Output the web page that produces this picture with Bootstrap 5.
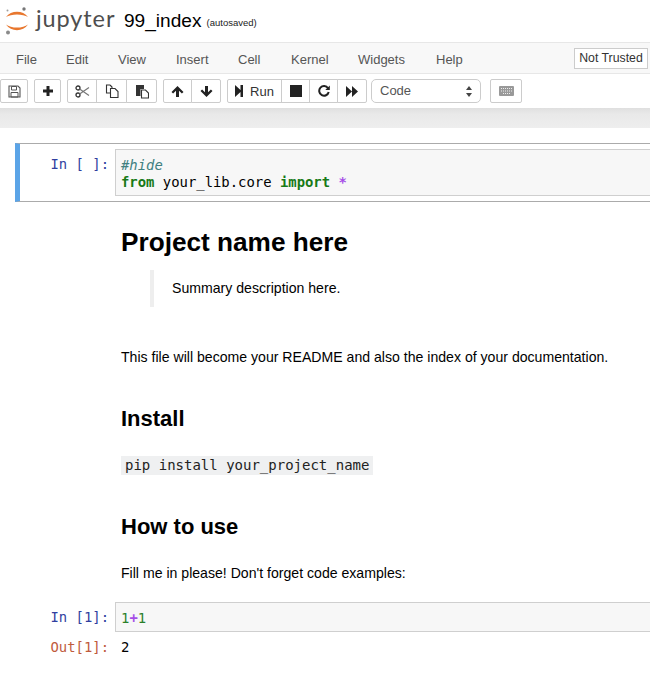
<!DOCTYPE html>
<html lang="en">
<head>
<meta charset="utf-8">
<title>99_index</title>
<link rel="stylesheet" href="https://cdn.jsdelivr.net/npm/bootstrap@5.3.0/dist/css/bootstrap.min.css">
<style>
html,body{height:673px;overflow:hidden}
body{background:#fff;color:#000;font-family:"Liberation Sans",Arial,sans-serif;font-size:13px;width:650px}
.nb-head{height:42px;padding-left:4px}
.nb-wordmark{font-family:Lato,sans-serif;font-weight:400;font-size:23.5px;color:#4e4e4e;letter-spacing:.9px;line-height:1;margin-left:6px;width:88px;padding-bottom:4px}
.nb-title{font-size:19.1px;color:#000;line-height:1}
.nb-saved{font-size:9.5px;color:#222;margin-left:5px;margin-top:4px}
.nb-menubar{height:32px;background:#f8f8f8;border-top:1px solid #e7e7e7;border-bottom:1px solid #e7e7e7;padding:0 2px 0 0}
.nb-menu-item{font-size:13px;color:#555;position:absolute;top:7px}
.nb-menu{position:relative;height:30px;flex:1}
.nb-trust{border:1px solid #ccc;background:#fff;color:#333;font-size:12.3px;height:21px;width:74px;line-height:19px;text-align:center}
.nb-toolbar{height:34px;padding:5px 0 0 0;gap:6px;background:#fff}
.nb-toolbar .btn{background:#fff;border:1px solid #ccc;border-radius:2px;color:#333;font-size:13px;height:24px;padding:0;display:flex;align-items:center;justify-content:center;--bs-btn-border-color:#ccc;line-height:1}
.nb-toolbar .btn-group .btn{border-radius:0}
.nb-toolbar .btn-group .btn:first-child{border-radius:2px 0 0 2px}
.nb-toolbar .btn-group .btn:last-child{border-radius:0 2px 2px 0}
.w-27{width:27px}.w-28{width:28px}.w-30{width:30px}.w-31{width:31px}.w-29{width:29px}.w-55{width:55px}
.nb-run-label{margin-left:7px}
.nb-select{width:110px;height:24px;border:1px solid #ccc;border-radius:5px;background:#fff;color:#555;font-size:13px;padding-left:8px;line-height:22px;margin-left:-2px}
.nb-kbd{width:32px;margin-left:3px}
.nb-band{height:20px;background:linear-gradient(#dfdfdf,#e9e9e9 30%,#eeeeee)}
.nb-page{padding:15px 0 0 15px}
.nb-cell{height:59px;border-top:1px solid #ababab;border-bottom:1px solid #ababab;border-left:5px solid #5ba4e7;padding:5px 0 0 0}
.nb-prompt{font-family:"DejaVu Sans Mono",monospace;font-size:13.9px;color:#303f9f;width:89px;text-align:right;line-height:19px;flex:none;padding-top:6px}
.nb-out{color:#bf5b3d;padding-top:0}
.nb-input{flex:1;background:#f7f7f7;border:1px solid #cfcfcf;border-right:0;font-family:"DejaVu Sans Mono",monospace;font-size:13.9px;line-height:17px;padding:7px 0 3px 5px;margin-left:6px;color:#000;white-space:pre}
.nb-cell .nb-input{height:47px}
.nb-kw{color:#187a18;font-weight:700}.nb-cm{color:#408080;font-style:italic}.nb-opb{color:#a64ee8;font-weight:700}.nb-num{color:#2a802a}
.nb-md{padding-left:106px}
.nb-h1{font-size:26.2px;font-weight:700;line-height:30px;margin:25px 0 0}
.nb-quote{border-left:4px solid #eee;margin:13px 0 0 29px;padding:0 0 0 18px;height:37px;font-size:14.1px;line-height:37px}
.nb-p{font-size:14.1px;line-height:20px;margin:0}
.nb-h2{font-size:22px;font-weight:700;line-height:26px;margin:0}
.nb-pip{display:inline-block;background:#eff0f1;font-family:"DejaVu Sans Mono",monospace;font-size:14px;line-height:19px;padding:0 4px;color:#222}
.nb-gap-a{margin-top:40px}.nb-gap-b{margin-top:39px}.nb-gap-c{margin-top:24px;line-height:19px}.nb-gap-d{margin-top:39px}.nb-gap-e{margin-top:23px}
.nb-cell2{margin-top:19px;margin-left:5px}
.nb-cell2 .nb-input{height:30px}
.nb-outrow{margin-top:6px;margin-left:5px}
.nb-result{color:#000;padding-left:12px;padding-top:0;text-align:left}
</style>
</head>
<body>
<header class="nb-head d-flex align-items-center">
  <svg width="26" height="34" viewBox="0 0 26 34" aria-hidden="true">
    <path d="M2 13 C7 6 19 6 24 13 C19 9.600 7 9.600 2 13Z" fill="#e8772e"/>
    <path d="M2 20.500 C7 28 19 28 24 20.500 C19 24.600 7 24.600 2 20.500Z" fill="#e8772e"/>
    <circle cx="20" cy="5" r="1.700" fill="#767677"/><circle cx="3.500" cy="6.500" r="1" fill="#9e9e9e"/><circle cx="4" cy="28.500" r="2" fill="#8a8a8a"/>
  </svg>
  <span class="nb-wordmark">jupyter</span>
  <span class="nb-title">99_index</span>
  <span class="nb-saved">(autosaved)</span>
</header>
<nav class="nb-menubar d-flex align-items-center">
  <div class="nb-menu">
    <span class="nb-menu-item" style="left:16px">File</span>
    <span class="nb-menu-item" style="left:66px">Edit</span>
    <span class="nb-menu-item" style="left:118px">View</span>
    <span class="nb-menu-item" style="left:176px">Insert</span>
    <span class="nb-menu-item" style="left:238px">Cell</span>
    <span class="nb-menu-item" style="left:291px">Kernel</span>
    <span class="nb-menu-item" style="left:358px">Widgets</span>
    <span class="nb-menu-item" style="left:436px">Help</span>
  </div>
  <div class="nb-trust">Not Trusted</div>
</nav>
<div class="nb-toolbar d-flex">
  <button class="btn w-28" aria-label="Save"><svg width="13" height="13" viewBox="0 0 13 13"><path d="M1 1h9l2 2v9H1z" fill="none" stroke="#555" stroke-width="1.100"/><path d="M3.500 1.500h5v3.500h-5zM3 7.500h7V12H3z" fill="none" stroke="#555"/></svg></button>
  <button class="btn w-27" aria-label="Add"><svg width="12" height="12" viewBox="0 0 12 12"><path d="M4.500 1h3v3.500H11v3H7.500V11h-3V7.500H1v-3h3.500z" fill="#222"/></svg></button>
  <div class="btn-group">
    <button class="btn w-30" aria-label="Cut"><svg width="15" height="13" viewBox="0 0 15 13"><circle cx="3" cy="3" r="2" fill="none" stroke="#333" stroke-width="1.300"/><circle cx="3" cy="10" r="2" fill="none" stroke="#333" stroke-width="1.300"/><path d="M4.600 4 14 10.500M4.600 9 14 2.500" stroke="#777" stroke-width="1.200"/></svg></button>
    <button class="btn w-31" aria-label="Copy"><svg width="14" height="14" viewBox="0 0 14 14"><path d="M5 1H1.500v8H5M5 1l2 2v1" fill="none" stroke="#333" stroke-width="1.100"/><path d="M5.500 4.500H10l3 3v6H5.500z" fill="#fff" stroke="#333" stroke-width="1.100"/></svg></button>
    <button class="btn w-31" aria-label="Paste"><svg width="14" height="15" viewBox="0 0 14 15"><path d="M1 1h8v4H5.500v7H1z" fill="#333"/><path d="M6.500 6h4l3 3v5h-7z" fill="#fff" stroke="#333" stroke-width="1.100"/></svg></button>
  </div>
  <div class="btn-group">
    <button class="btn w-29" aria-label="Move up"><svg width="13" height="13" viewBox="0 0 13 13"><path d="M6.500 1 12.500 7l-1.600 1.600-2.900-2.900V12H5V5.700L2.100 8.600 .5 7z" fill="#222"/></svg></button>
    <button class="btn w-30" aria-label="Move down"><svg width="13" height="13" viewBox="0 0 13 13"><path d="M6.500 12 12.500 6l-1.600-1.600-2.900 2.900V1H5v6.300L2.100 4.400 .5 6z" fill="#222"/></svg></button>
  </div>
  <div class="btn-group">
    <button class="btn w-55" aria-label="Run"><svg width="8" height="12" viewBox="0 0 8 12"><path d="M0 0l5.500 5V0H8v12H5.500V7L0 12z" fill="#222"/></svg><span class="nb-run-label">Run</span></button>
    <button class="btn w-29" aria-label="Stop"><svg width="12" height="12" viewBox="0 0 12 12"><rect width="12" height="12" fill="#222"/></svg></button>
    <button class="btn w-29" aria-label="Restart"><svg width="12" height="12" viewBox="0 0 12 12"><path d="M10 3.200A4.800 4.800 0 1 0 10.700 7" fill="none" stroke="#222" stroke-width="2"/><path d="M11.800.5v4.500H7.300z" fill="#222"/></svg></button>
    <button class="btn w-30" aria-label="Run all"><svg width="12" height="11" viewBox="0 0 12 11"><path d="M0 0l6 5.500L0 11zM6 0l6 5.500L6 11z" fill="#222"/></svg></button>
  </div>
  <div class="nb-select d-flex align-items-center justify-content-between">Code<svg class="me-2" width="6" height="11" viewBox="0 0 6 11"><path d="M3 0l3 4H0zM3 11 0 7h6z" fill="#444"/></svg></div>
  <button class="btn nb-kbd" aria-label="Keyboard"><svg width="15" height="10" viewBox="0 0 15 10"><rect width="15" height="10" rx="1" fill="#999"/><path d="M2 2.500h11M2 5h11M4 7.500h7" stroke="#eee" stroke-dasharray="1 1"/></svg></button>
</div>
<div class="nb-band"></div>
<main class="nb-page">
  <div class="nb-cell d-flex">
    <div class="nb-prompt">In [ ]:</div>
    <div class="nb-input"><span class="nb-cm">#hide</span>
<span class="nb-kw">from</span> your_lib.core <span class="nb-kw">import</span> <span class="nb-opb">*</span></div>
  </div>
  <div class="nb-md">
    <h1 class="nb-h1">Project name here</h1>
    <blockquote class="nb-quote">Summary description here.</blockquote>
    <p class="nb-p nb-gap-a">This file will become your README and also the index of your documentation.</p>
    <h2 class="nb-h2 nb-gap-b">Install</h2>
    <div class="nb-gap-c"><span class="nb-pip">pip install your_project_name</span></div>
    <h2 class="nb-h2 nb-gap-d">How to use</h2>
    <p class="nb-p nb-gap-e">Fill me in please! Don't forget code examples:</p>
  </div>
  <div class="nb-cell2 d-flex">
    <div class="nb-prompt">In [1]:</div>
    <div class="nb-input"><span class="nb-num">1</span><span class="nb-opb">+</span><span class="nb-num">1</span></div>
  </div>
  <div class="nb-outrow d-flex">
    <div class="nb-prompt nb-out">Out[1]:</div>
    <div class="nb-prompt nb-result">2</div>
  </div>
</main>
<script src="https://cdn.jsdelivr.net/npm/bootstrap@5.3.0/dist/js/bootstrap.bundle.min.js"></script>
</body>
</html>
